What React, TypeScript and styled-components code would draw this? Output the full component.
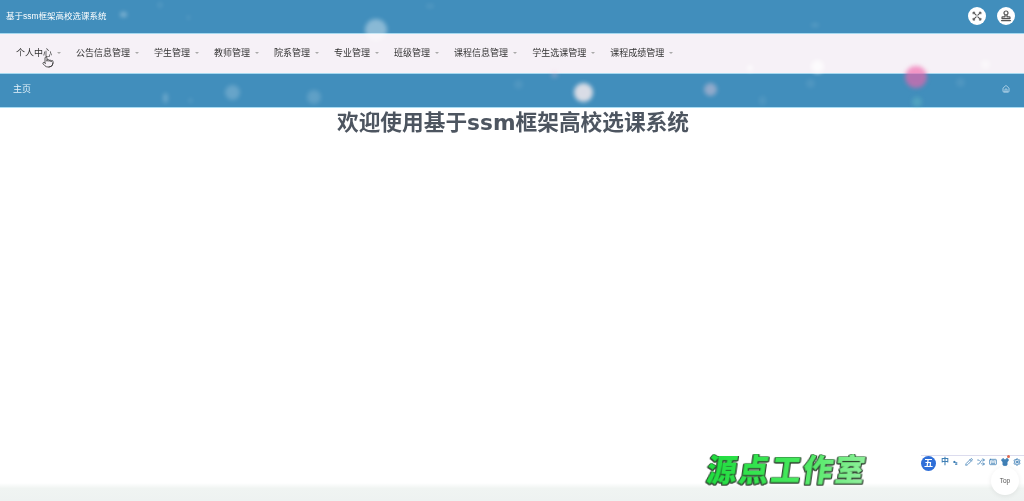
import React from "react";
import styled, { createGlobalStyle } from "styled-components";
import { House, Pointer, Pencil, Keyboard, Shirt, Settings, Shuffle } from "lucide-react";

const Global = createGlobalStyle`
  html, body { margin: 0; padding: 0; height: 100%; overflow: hidden; background: #fff; }
  #root { height: 100%; }
  * { box-sizing: border-box; }
`;

const Page = styled.div`
  position: relative;
  height: 501px;
  width: 1024px;
  display: flex;
  flex-direction: column;
  overflow: hidden;
  font-family: "Liberation Sans", "Noto Sans CJK SC", sans-serif;
`;

const TopBar = styled.header`
  height: 34px;
  flex: none;
  background: #418ebc;
  border-bottom: 1px solid #a5d8ef;
  display: flex;
  align-items: center;
  justify-content: space-between;
  padding: 0 9px 2px 6px;
`;

const Brand = styled.div`
  color: #fff;
  font-size: 8.5px;
  line-height: 12px;
  filter: blur(0.6px);
`;

const Actions = styled.div`
  display: flex;
  gap: 11px;
`;

const RoundButton = styled.div`
  width: 18px;
  height: 18px;
  border-radius: 50%;
  background: #fff;
  color: #555;
  display: flex;
  align-items: center;
  justify-content: center;
  filter: blur(0.4px);
`;

const Nav = styled.nav`
  height: 40px;
  flex: none;
  background: #f6f1f7;
  border-bottom: 1px solid #a5d8ef;
  display: flex;
  align-items: center;
  padding: 0 0 2px 16px;
`;

const NavItem = styled.div`
  position: relative;
  display: flex;
  align-items: center;
  padding-right: 24px;
  color: #333;
  font-size: 9px;
  line-height: 12px;
  white-space: nowrap;
  filter: blur(0.6px);
`;

const Caret = styled.span`
  position: absolute;
  right: 15px;
  top: 5px;
  border-left: 2px solid transparent;
  border-right: 2px solid transparent;
  border-top: 2px solid #aaa;
`;

const Crumbs = styled.div`
  height: 34px;
  flex: none;
  background: #418ebc;
  border-bottom: 1px solid #a9dcf3;
  display: flex;
  align-items: center;
  justify-content: space-between;
  padding: 0 14px 3px 13px;
  color: #e4f2fa;
  font-size: 9px;
  line-height: 12px;
`;

const CrumbText = styled.span`
  filter: blur(0.6px);
`;

const Main = styled.main`
  flex: 1;
  background: #fff;
  display: flex;
  justify-content: center;
`;

const Title = styled.h1`
  margin: 1px 0 0;
  padding-left: 2px;
  font-family: "DejaVu Sans", "Noto Sans CJK SC", sans-serif;
  font-size: 21.7px;
  line-height: 28px;
  font-weight: 700;
  color: #4d5560;
  filter: blur(0.35px);
`;

const Footer = styled.footer`
  height: 18px;
  flex: none;
  background: linear-gradient(#ffffff, #f0f4f2 30%, #eef2f1);
`;

const Flake = styled.span`
  position: absolute;
  border-radius: 50%;
  pointer-events: none;
  filter: blur(2.2px);
`;

const Hand = styled.div`
  position: absolute;
  left: 42px;
  top: 56px;
  color: #333;
  filter: blur(0.4px);
  display: flex;
`;

const Watermark = styled.div`
  position: absolute;
  left: 707px;
  top: 454px;
  font-size: 30px;
  line-height: 34px;
  font-weight: 900;
  letter-spacing: 2px;
  white-space: nowrap;
  transform: skewX(-8deg);
  background: linear-gradient(100deg, #1fdc3e 0%, #45e85c 55%, #95f0a0 100%);
  -webkit-background-clip: text;
  background-clip: text;
  color: transparent;
  -webkit-text-stroke: 0.3px transparent;
  filter: drop-shadow(1px 0 0 #2a3a2a) drop-shadow(-1px 0 0 #2a3a2a) drop-shadow(0 1px 0 #2a3a2a) blur(0.4px);
`;

const ImeBar = styled.div`
  position: absolute;
  left: 921px;
  top: 455px;
  right: 0;
  display: flex;
  align-items: center;
  gap: 4px;
  height: 16px;
  padding-bottom: 3px;
  color: #3f7fb5;
  border-top: 1px solid #dcdcee;
  filter: blur(0.4px);
`;

const ImeLogo = styled.div`
  width: 15px;
  height: 15px;
  margin-top: 3px;
  border-radius: 50%;
  background: #2f6fd8;
  color: #fff;
  font-size: 9px;
  font-weight: 700;
  line-height: 15px;
  text-align: center;
  margin-right: 1px;
`;

const ImeText = styled.span`
  font-size: 8px;
  line-height: 10px;
  width: 8px;
  font-weight: 700;
`;

const ImeDots = styled.span`
  width: 8px;
  font-size: 8px;
  line-height: 8px;
  font-weight: 700;
  letter-spacing: -1px;
`;

const ShirtBox = styled.span`
  position: relative;
  display: flex;
`;

const RedDot = styled.i`
  position: absolute;
  right: -1px;
  top: -3px;
  width: 3px;
  height: 3px;
  border-radius: 50%;
  background: #e06a50;
`;

const TopButton = styled.div`
  position: absolute;
  left: 991px;
  top: 467px;
  width: 28px;
  height: 28px;
  border-radius: 50%;
  background: #fff;
  box-shadow: 0 1px 5px rgba(0, 0, 0, 0.08);
  color: #555;
  font-size: 6.5px;
  line-height: 28px;
  text-align: center;
  filter: blur(0.3px);
`;

const menu = ["个人中心", "公告信息管理", "学生管理", "教师管理", "院系管理", "专业管理", "班级管理", "课程信息管理", "学生选课管理", "课程成绩管理"];

const flakes: [number, number, number, number, string][] = [
  [123, 14, 7, 5, "rgba(255,255,255,.35)"],
  [160, 5, 4, 6, "rgba(255,255,255,.12)"],
  [188, 17, 3, 3, "rgba(255,255,255,.2)"],
  [232, 92, 15, 15, "rgba(255,255,255,.2)"],
  [165, 98, 5, 10, "rgba(255,255,255,.22)"],
  [314, 97, 14, 14, "rgba(255,255,255,.16)"],
  [190, 100, 3, 3, "rgba(255,255,255,.25)"],
  [376, 30, 22, 22, "rgba(255,255,255,.38)"],
  [430, 6, 8, 4, "rgba(255,255,255,.1)"],
  [583, 92, 19, 19, "rgba(255,240,240,.8)"],
  [518, 84, 9, 9, "rgba(255,255,255,.08)"],
  [554, 74, 7, 7, "rgba(255,190,220,.25)"],
  [815, 25, 8, 4, "rgba(255,255,255,.12)"],
  [710, 89, 13, 13, "rgba(255,210,225,.42)"],
  [916, 77, 22, 22, "rgba(240,100,170,.65)"],
  [917, 102, 10, 10, "rgba(120,210,200,.3)"],
  [762, 100, 7, 9, "rgba(255,255,255,.08)"],
  [960, 82, 9, 9, "rgba(255,255,255,.08)"],
  [810, 83, 9, 9, "rgba(255,255,255,.08)"],
  [817, 66, 13, 13, "rgba(255,255,255,.7)"],
  [750, 68, 6, 6, "rgba(255,255,255,.7)"],
  [985, 64, 9, 9, "rgba(255,255,255,.5)"],
];

const CrossArrows = () => (
  <svg width="10" height="10" viewBox="0 0 12 12" fill="none" stroke="currentColor" strokeWidth="1.3" strokeLinecap="round" strokeLinejoin="round">
    <path d="M2.5 2.5 L5 5 M9.5 2.5 L7 5 M2.5 9.5 L5 7 M9.5 9.5 L7 7" />
    <path d="M1.4 3.2V1.4H3.2 M8.8 1.4H10.6V3.2 M1.4 8.8V10.6H3.2 M10.6 8.8V10.6H8.8" />
  </svg>
);

const UserStamp = () => (
  <svg width="12" height="12" viewBox="0 0 12 12" fill="none" stroke="currentColor" strokeWidth="1.2" strokeLinecap="round" strokeLinejoin="round">
    <circle cx="6" cy="3" r="2" />
    <path d="M5 5 V6.8 H2.6 Q2 6.8 2 7.6 V8.6 H10 V7.6 Q10 6.8 9.4 6.8 H7 V5" />
    <path d="M1.6 10.6 H10.4" strokeWidth="1.4" />
  </svg>
);

export default function App() {
  return (
    <Page>
      <Global />
      <TopBar>
        <Brand>基于ssm框架高校选课系统</Brand>
        <Actions>
          <RoundButton><CrossArrows /></RoundButton>
          <RoundButton><UserStamp /></RoundButton>
        </Actions>
      </TopBar>
      <Nav>
        {menu.map((m) => (
          <NavItem key={m}>{m}<Caret /></NavItem>
        ))}
      </Nav>
      <Crumbs>
        <CrumbText>主页</CrumbText>
        <House size={8} strokeWidth={2} />
      </Crumbs>
      <Main>
        <Title>欢迎使用基于ssm框架高校选课系统</Title>
      </Main>
      <Footer />
      {flakes.map(([x, y, w, h, c], i) => (
        <Flake key={i} style={{ left: x - w / 2, top: y - h / 2, width: w, height: h, background: c }} />
      ))}
      <Hand><Pointer size={12} strokeWidth={1.6} /></Hand>
      <Watermark>源点工作室</Watermark>
      <ImeBar>
        <ImeLogo>五</ImeLogo>
        <ImeText>中</ImeText>
        <ImeDots>•ₛ</ImeDots>
        <Pencil size={8} strokeWidth={2.4} />
        <Shuffle size={8} strokeWidth={2.4} />
        <Keyboard size={8} strokeWidth={2.4} />
        <ShirtBox>
          <Shirt size={8} strokeWidth={3} fill="currentColor" />
          <RedDot />
        </ShirtBox>
        <Settings size={8} strokeWidth={3} />
      </ImeBar>
      <TopButton>Top</TopButton>
    </Page>
  );
}
